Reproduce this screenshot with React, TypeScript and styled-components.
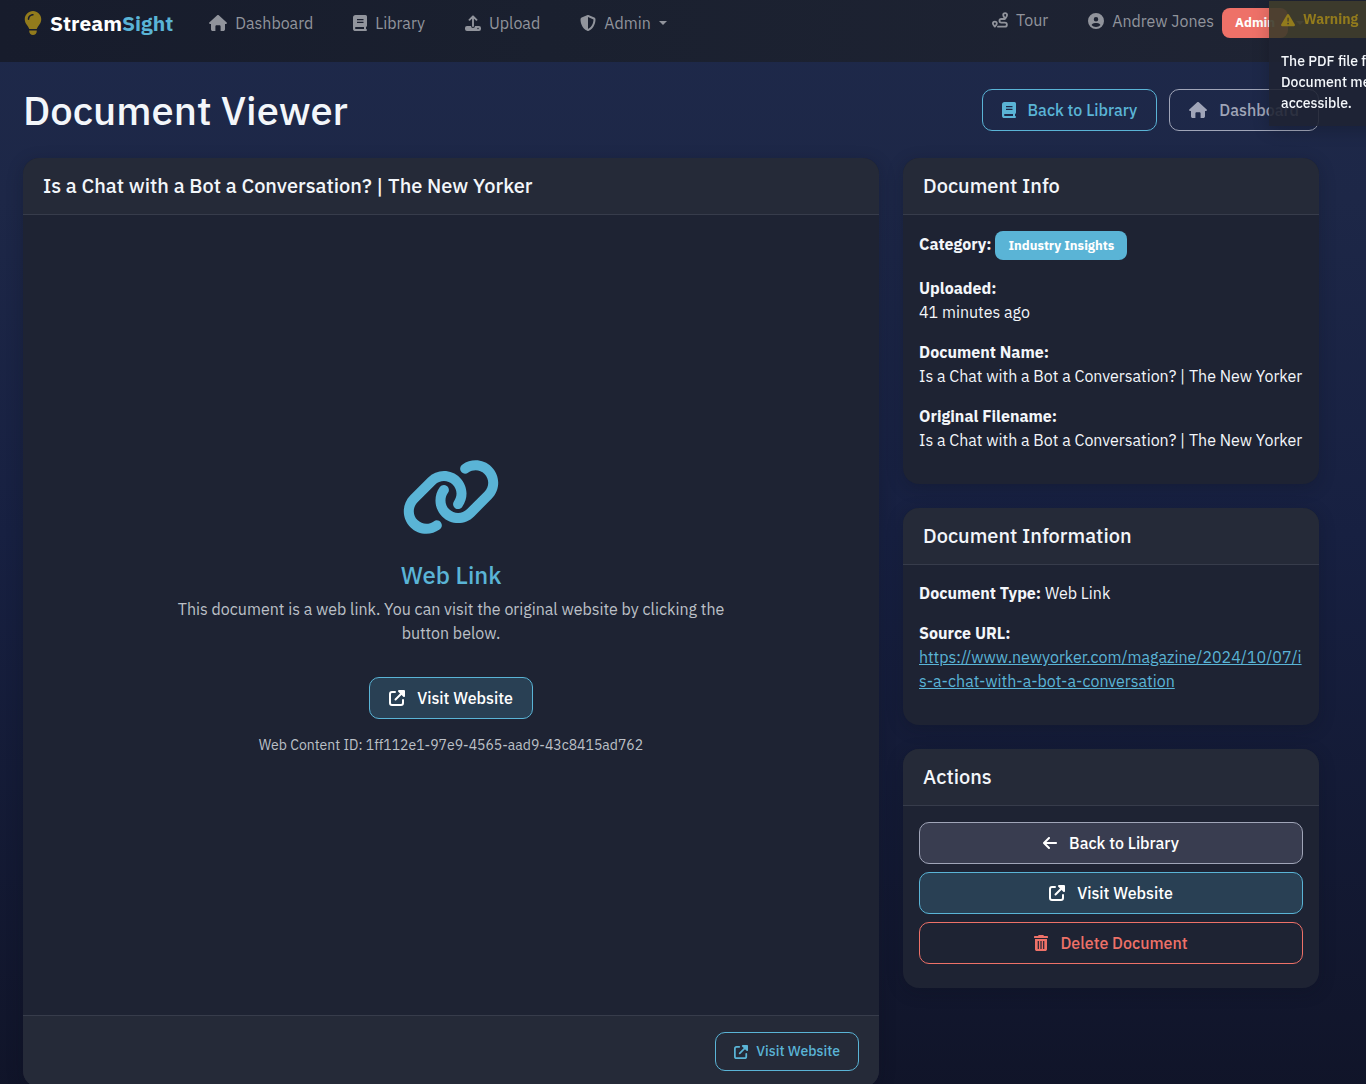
import React from 'react';
import styled, { createGlobalStyle, css } from 'styled-components';
import {
  FaArrowLeft,
  FaCircleUser,
  FaLightbulb,
  FaLink,
  FaShieldHalved,
  FaTriangleExclamation,
} from 'react-icons/fa6';

const color = {
  blue: '#5ab4d6',
  red: '#ee7168',
  gold: '#927b1c',
  navText: '#91949c',
  text: '#f3f6fa',
  muted: '#bcc0c7',
  grey: '#a0a5b8',
  card: '#1e2333',
  cardHead: '#252a38',
  line: '#373c4b',
};

const GlobalStyle = createGlobalStyle`
  *, *::before, *::after { box-sizing: border-box; }
  html { background: #101428; }
  body {
    margin: 0;
    overflow-x: hidden;
    font-family: "IBM Plex Sans", Roboto, "Liberation Sans", sans-serif;
    font-size: 16px;
    line-height: 24px;
    color: ${color.text};
    -webkit-font-smoothing: antialiased;
  }
  h1, h2, h3, p { margin: 0; }
  svg { height: 1em; flex: none; }
`;

const Page = styled.div`
  min-height: 100vh;
  background: linear-gradient(180deg, #1e294a 0%, #1d2747 18%, #172041 48%, #101428 100%);
`;

/* ---------- icons ---------- */

const BulbIcon = styled(FaLightbulb)`
  width: 0.75em;
`;

const ArrowIcon = styled(FaArrowLeft)`
  width: 0.875em;
`;

const LinkIcon = styled(FaLink)`
  width: 1.25em;
`;

const BookIcon = () => (
  <svg viewBox="0 0 14 16" aria-hidden="true">
    <path
      d="M2.600 0h9.900A1.500 1.500 0 0 1 14 1.500v9c0 .7-.4 1.200-1 1.400V14a1 1 0 0 1 0 2H2.600A2.600 2.600 0 0 1 0 13.400V2.600A2.600 2.600 0 0 1 2.600 0zM3 12a1 1 0 0 0 0 2h8v-2zM4 4v1.200h6.500V4zm0 2.800V8h6.500V6.800z"
      fill="currentColor"
      fillRule="evenodd"
    />
  </svg>
);

const HouseIcon = () => (
  <svg viewBox="0 0 18 16" fill="currentColor" aria-hidden="true">
    <path d="M8.200.300a1.200 1.200 0 0 1 1.600 0l7.900 7.100c.6.6.2 1.600-.6 1.600H16v5.200c0 1-.8 1.800-1.800 1.800H11.600v-4.500c0-.7-.5-1.200-1.200-1.200H7.600c-.7 0-1.200.5-1.200 1.200V16H3.800C2.800 16 2 15.200 2 14.200V9H.900c-.8 0-1.200-1-.6-1.600z" />
  </svg>
);

const UploadIcon = () => (
  <svg viewBox="0 0 16 16" fill="none" aria-hidden="true">
    <path d="M8 1.500V11M4.500 4.800 8 1.300l3.500 3.500" stroke="currentColor" strokeWidth="1.900" strokeLinecap="round" strokeLinejoin="round" />
    <path
      d="M2 11h4a2 2 0 0 0 4 0h4a2 2 0 0 1 2 2v1a2 2 0 0 1-2 2H2a2 2 0 0 1-2-2v-1a2 2 0 0 1 2-2zm11 1.750a.75.75 0 1 0 0 1.500.75.75 0 0 0 0-1.500z"
      fill="currentColor"
      fillRule="evenodd"
    />
  </svg>
);

const ExternalIcon = () => (
  <svg viewBox="0 0 16 16" fill="none" aria-hidden="true">
    <path
      d="M6 2H3a2 2 0 0 0-2 2v9a2 2 0 0 0 2 2h9a2 2 0 0 0 2-2v-3M6.500 9.500 14 2"
      stroke="currentColor"
      strokeWidth="2"
      strokeLinecap="round"
    />
    <path d="M10 0h5a1 1 0 0 1 1 1v5c0 .9-1 1.300-1.700.700L9.300 1.700C8.700 1 9.100 0 10 0z" fill="currentColor" />
  </svg>
);

const TrashIcon = () => (
  <svg viewBox="0 0 14 16" aria-hidden="true">
    <path
      d="M4.700 0h4.600l.7 1h3.200a.8.8 0 0 1 .8.900v.6a.6.6 0 0 1-.6.600H.600a.6.6 0 0 1-.6-.600v-.6A.8.8 0 0 1 .800 1H4zM1 4h12v10.200c0 1-.8 1.800-1.800 1.800H2.800C1.800 16 1 15.200 1 14.200zm2.700 2v8h1.200V6zm2.700 0v8h1.200V6zm2.700 0v8h1.200V6z"
      fill="currentColor"
      fillRule="evenodd"
    />
  </svg>
);

const RouteIcon = () => (
  <svg viewBox="0 0 16 16" fill="none" stroke="currentColor" strokeWidth="1.800" strokeLinecap="round" strokeLinejoin="round" aria-hidden="true">
    <path d="M13.200 6.600c1-1.200 1.900-2.300 1.900-3.500a1.900 1.900 0 0 0-3.900 0c0 1.200 1 2.300 2 3.500z" />
    <path d="M2.900 14.600c1-1.200 1.900-2 1.900-3.100a1.900 1.900 0 0 0-3.900 0c0 1.100 1 1.900 2 3.100z" />
    <path d="M12.500 7H9.300a1.800 1.800 0 0 0 0 3.700h3.600a2 2 0 0 1 0 4H6" />
  </svg>
);

const Caret = styled.span`
  border: 4px solid transparent;
  border-top-color: currentColor;
  border-bottom: 0;
`;

/* ---------- navigation ---------- */

const Navbar = styled.header`
  display: flex;
  justify-content: space-between;
  align-items: flex-start;
  height: 62px;
  padding: 8px 62px 0 24px;
  background: linear-gradient(90deg, #171c2c 0%, #1a202f 40%, #1f2434 100%);
  color: ${color.navText};
`;

const NavGroup = styled.nav<{ $align: 'center' | 'flex-start' }>`
  display: flex;
  align-items: ${(p) => p.$align};
  gap: 40px;
  height: 30px;
`;

const NavLink = styled.a`
  display: flex;
  align-items: center;
  gap: 8px;
  color: inherit;
  text-decoration: none;
`;

const MenuButton = styled.button`
  display: flex;
  align-items: center;
  gap: 8px;
  padding: 0;
  border: 0;
  background: none;
  color: inherit;
  font: inherit;
  cursor: pointer;
`;

const UserName = styled.span`
  display: flex;
  align-items: center;
  align-self: flex-start;
  gap: 8px;
  line-height: 26px;
`;

const Brand = styled(NavLink)`
  margin-right: -4px;
  font-size: 21px;
  font-weight: 700;
  color: #fff;
  svg { font-size: 24px; color: ${color.gold}; }
  span span { color: ${color.blue}; }
`;

const Badge = styled.span<{ $tone: string; $tall?: boolean }>`
  display: inline-block;
  padding: 0 13px;
  border-radius: 8px;
  background: ${(p) => p.$tone};
  color: #fff;
  font-size: 13px;
  font-weight: 700;
  line-height: ${(p) => (p.$tall ? 30 : 29)}px;
`;

/* ---------- page head ---------- */

const Main = styled.main`
  padding: 24px 47px 24px 23px;
`;

const PageHead = styled.div`
  display: flex;
  justify-content: space-between;
  align-items: center;
  margin-bottom: 24px;
`;

const Title = styled.h1`
  font-size: 40px;
  line-height: 48px;
  font-weight: 500;
`;

const ButtonRow = styled.div`
  display: flex;
  gap: 12px;
`;

type Tone = 'outlineBlue' | 'outlineGrey' | 'outlineRed' | 'blue' | 'grey';

const tones: Record<Tone, ReturnType<typeof css>> = {
  outlineBlue: css`border-color: ${color.blue}; color: ${color.blue};`,
  outlineGrey: css`border-color: ${color.grey}; color: ${color.grey};`,
  outlineRed: css`border-color: ${color.red}; color: ${color.red};`,
  blue: css`border-color: ${color.blue}; background: #294054; color: #fff;`,
  grey: css`border-color: ${color.grey}; background: #393d50; color: #fff;`,
};

const buttonStyle = css<{ $tone: Tone; $small?: boolean }>`
  display: inline-flex;
  align-items: center;
  justify-content: center;
  gap: ${(p) => (p.$small ? 8 : 12)}px;
  padding: 8px ${(p) => (p.$small ? 18 : 19)}px;
  border: 1px solid;
  border-radius: 10px;
  background: none;
  font-family: inherit;
  font-size: ${(p) => (p.$small ? 14 : 16)}px;
  font-weight: 500;
  line-height: ${(p) => (p.$small ? 21 : 24)}px;
  text-decoration: none;
  cursor: pointer;
  ${(p) => tones[p.$tone]}
`;

const ButtonLink = styled.a`${buttonStyle}`;
const Button = styled.button`${buttonStyle}`;

/* ---------- cards ---------- */

const Columns = styled.div`
  display: grid;
  grid-template-columns: repeat(12, minmax(0, 1fr));
  gap: 24px;
  align-items: start;
`;

const Card = styled.section`
  overflow: hidden;
  border-radius: 16px;
  background: ${color.card};
  box-shadow: 0 4px 16px rgba(10, 14, 28, 0.25);
`;

const ViewerCard = styled(Card)`
  grid-column: span 8;
`;

const Side = styled.aside`
  grid-column: span 4;
  display: grid;
  gap: 24px;
`;

const CardHead = styled.h2`
  margin: 0;
  padding: 16px 20px;
  border-bottom: 1px solid ${color.line};
  background: ${color.cardHead};
  font-size: 20px;
  line-height: 24px;
  font-weight: 500;
`;

const CardFoot = styled.div`
  display: flex;
  justify-content: flex-end;
  padding: 16px 20px;
  border-top: 1px solid ${color.line};
  background: ${color.cardHead};
`;

const ViewerBody = styled.div`
  display: flex;
  flex-direction: column;
  align-items: center;
  justify-content: center;
  min-height: 800px;
  padding-bottom: 18px;
  text-align: center;
  color: ${color.muted};
`;

const BigIcon = styled.div`
  display: flex;
  margin-bottom: 24px;
  font-size: 80px;
  color: ${color.blue};
`;

const LinkTitle = styled.h3`
  margin-bottom: 8px;
  font-size: 24px;
  line-height: 28px;
  font-weight: 500;
  color: ${color.blue};
`;

const LinkText = styled.p`
  max-width: 568px;
  margin-bottom: 32px;
`;

const ContentId = styled.p`
  margin-top: 16px;
  font-size: 14px;
  line-height: 21px;
`;

const InfoBody = styled.div`
  padding: 16px;
`;

const Field = styled.p`
  margin-bottom: 16px;
  overflow-wrap: anywhere;
  strong { font-weight: 700; }
`;

const SourceLink = styled.a`
  color: ${color.blue};
  word-break: break-all;
`;

const ActionList = styled.div`
  display: grid;
  gap: 8px;
  padding: 16px 16px 24px;
`;

/* ---------- notification ---------- */

const Toast = styled.div`
  position: fixed;
  top: 1px;
  right: -253px;
  width: 350px;
  background: rgba(30, 35, 50, 0.89);
  box-shadow: 0 4px 16px rgba(0, 0, 0, 0.2);
  font-size: 14px;
  line-height: 21px;
`;

const ToastHead = styled.div`
  display: flex;
  align-items: center;
  gap: 8px;
  padding: 8px 12px;
  border-bottom: 1px solid transparent;
  background: rgba(146, 123, 28, 0.26);
  background-clip: padding-box;
  color: ${color.gold};
  font-weight: 700;
`;

const ToastBody = styled.div`
  padding: 12px;
  font-weight: 500;
  span { display: block; }
`;

const docName = 'Is a Chat with a Bot a Conversation? | The New Yorker';
const url = 'https://www.newyorker.com/magazine/2024/10/07/is-a-chat-with-a-bot-a-conversation';

export default function App() {
  return (
    <Page>
      <GlobalStyle />
      <Navbar>
        <NavGroup $align="center" aria-label="Main">
          <Brand href="#">
            <BulbIcon />
            <span>Stream<span>Sight</span></span>
          </Brand>
          <NavLink href="#"><HouseIcon />Dashboard</NavLink>
          <NavLink href="#"><BookIcon />Library</NavLink>
          <NavLink href="#"><UploadIcon />Upload</NavLink>
          <MenuButton type="button"><FaShieldHalved />Admin<Caret /></MenuButton>
        </NavGroup>
        <NavGroup $align="flex-start" aria-label="Account">
          <NavLink href="#"><RouteIcon />Tour</NavLink>
          <MenuButton type="button">
            <UserName><FaCircleUser />Andrew Jones</UserName>
            <Badge $tone={color.red} $tall>Admin</Badge>
            <Caret />
          </MenuButton>
        </NavGroup>
      </Navbar>

      <Main>
        <PageHead>
          <Title>Document Viewer</Title>
          <ButtonRow>
            <ButtonLink href="#" $tone="outlineBlue"><BookIcon />Back to Library</ButtonLink>
            <ButtonLink href="#" $tone="outlineGrey"><HouseIcon />Dashboard</ButtonLink>
          </ButtonRow>
        </PageHead>

        <Columns>
          <ViewerCard>
            <CardHead>{docName}</CardHead>
            <ViewerBody>
              <BigIcon><LinkIcon /></BigIcon>
              <LinkTitle>Web Link</LinkTitle>
              <LinkText>
                This document is a web link. You can visit the original website by clicking the button below.
              </LinkText>
              <ButtonLink href={url} $tone="blue"><ExternalIcon />Visit Website</ButtonLink>
              <ContentId>Web Content ID: 1ff112e1-97e9-4565-aad9-43c8415ad762</ContentId>
            </ViewerBody>
            <CardFoot>
              <ButtonLink href={url} $tone="outlineBlue" $small><ExternalIcon />Visit Website</ButtonLink>
            </CardFoot>
          </ViewerCard>

          <Side>
            <Card>
              <CardHead>Document Info</CardHead>
              <InfoBody>
                <Field><strong>Category:</strong> <Badge $tone={color.blue}>Industry Insights</Badge></Field>
                <Field><strong>Uploaded:</strong><br />41 minutes ago</Field>
                <Field><strong>Document Name:</strong><br />{docName}</Field>
                <Field><strong>Original Filename:</strong><br />{docName}</Field>
              </InfoBody>
            </Card>
            <Card>
              <CardHead>Document Information</CardHead>
              <InfoBody>
                <Field><strong>Document Type:</strong> Web Link</Field>
                <Field><strong>Source URL:</strong><br /><SourceLink href={url}>{url}</SourceLink></Field>
              </InfoBody>
            </Card>
            <Card>
              <CardHead>Actions</CardHead>
              <ActionList>
                <ButtonLink href="#" $tone="grey"><ArrowIcon />Back to Library</ButtonLink>
                <ButtonLink href={url} $tone="blue"><ExternalIcon />Visit Website</ButtonLink>
                <Button type="button" $tone="outlineRed"><TrashIcon />Delete Document</Button>
              </ActionList>
            </Card>
          </Side>
        </Columns>
      </Main>

      <Toast role="alert">
        <ToastHead><FaTriangleExclamation />Warning</ToastHead>
        <ToastBody>
          <span>The PDF file for this document is missing.</span>
          <span>Document metadata is still</span>
          <span>accessible.</span>
        </ToastBody>
      </Toast>
    </Page>
  );
}
